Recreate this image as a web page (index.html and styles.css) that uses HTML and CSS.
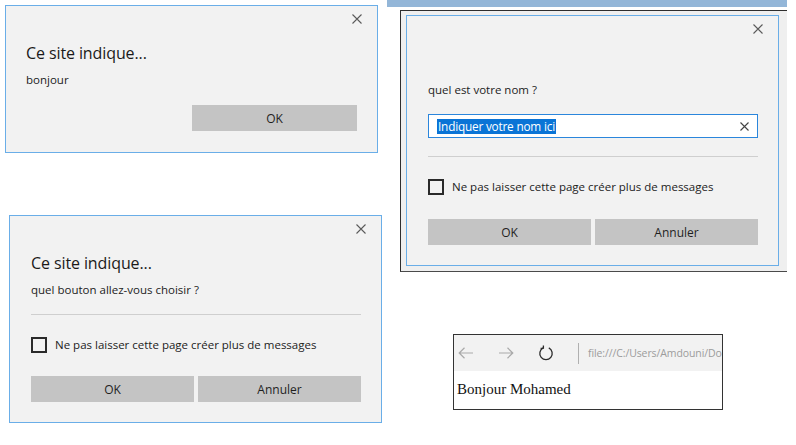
FILE: index.html
```html
<!DOCTYPE html>
<html lang="fr">
<head>
<meta charset="utf-8">
<title>Boîtes de dialogue</title>
<link rel="stylesheet" href="styles.css">
</head>
<body>
<div class="canvas">

  <section class="dialog d1">
    <div class="dlg-head">
      <svg class="close" width="10" height="10" viewBox="0 0 10 10"><path d="M0.5 0.5 L9.5 9.5 M9.5 0.5 L0.5 9.5"/></svg>
    </div>
    <h1 class="dlg-title">Ce site indique...</h1>
    <p class="dlg-msg">bonjour</p>
    <div class="dlg-actions end">
      <button class="btn">OK</button>
    </div>
  </section>

  <div class="top-bar"></div>
  <div class="frame">
    <section class="dialog d2">
      <div class="dlg-head">
        <svg class="close" width="10" height="10" viewBox="0 0 10 10"><path d="M0.5 0.5 L9.5 9.5 M9.5 0.5 L0.5 9.5"/></svg>
      </div>
      <p class="dlg-msg prompt">quel est votre nom ?</p>
      <div class="input">
        <span class="sel">Indiquer votre nom ici</span>
        <svg class="clear" width="9" height="9" viewBox="0 0 9 9"><path d="M0.5 0.5 L8.5 8.5 M8.5 0.5 L0.5 8.5"/></svg>
      </div>
      <hr class="sep sep-prompt">
      <label class="check"><span class="box"></span><span>Ne pas laisser cette page créer plus de messages</span></label>
      <div class="dlg-actions two">
        <button class="btn">OK</button>
        <button class="btn">Annuler</button>
      </div>
    </section>
  </div>

  <section class="dialog d3">
    <div class="dlg-head">
      <svg class="close" width="10" height="10" viewBox="0 0 10 10"><path d="M0.5 0.5 L9.5 9.5 M9.5 0.5 L0.5 9.5"/></svg>
    </div>
    <h1 class="dlg-title">Ce site indique...</h1>
    <p class="dlg-msg">quel bouton allez-vous choisir ?</p>
    <hr class="sep">
    <label class="check"><span class="box"></span><span>Ne pas laisser cette page créer plus de messages</span></label>
    <div class="dlg-actions two">
      <button class="btn">OK</button>
      <button class="btn">Annuler</button>
    </div>
  </section>

  <div class="browser">
    <div class="toolbar">
      <svg class="nav back" width="16" height="12" viewBox="0 0 16 12"><path d="M15 6 H1 M6.5 0.8 L1.2 6 L6.5 11.2"/></svg>
      <svg class="nav fwd" width="16" height="12" viewBox="0 0 16 12"><path d="M1 6 H15 M9.5 0.8 L14.8 6 L9.5 11.2"/></svg>
      <svg class="nav refresh" width="16" height="16" viewBox="0 0 16 16"><path d="M10.8 2.9 A6.2 6.2 0 1 1 5.2 2.9"/><path d="M5.4 0.4 L5.4 3.2 L2.6 3.4"/></svg>
      <span class="vsep"></span>
      <span class="url">file:///C:/Users/Amdouni/Do</span>
    </div>
    <div class="page">Bonjour Mohamed</div>
  </div>

</div>
</body>
</html>
```

FILE: styles.css
```css
* { box-sizing: border-box; }

html, body {
  margin: 0;
  padding: 0;
  background: #ffffff;
}

.canvas {
  position: relative;
  width: 796px;
  height: 445px;
  overflow: hidden;
  font-family: "Open Sans", "Noto Sans", sans-serif;
  color: #1f1f1f;
}

/* ---------- dialogs ---------- */
.dialog {
  position: absolute;
  width: 373px;
  display: flex;
  flex-direction: column;
  background: #f2f2f2;
  border: 1px solid #6aaee8;
  padding: 0 20px 20px 21px;
}

.d1 { left: 5px; top: 5px; height: 148px; padding-bottom: 21px; padding-left: 20px; }
.d2 { position: static; height: 251px; }
.d3 { left: 9px; top: 215px; height: 208px; }

.dlg-head {
  height: 36px;
  display: flex;
  justify-content: flex-end;
  align-items: flex-start;
  padding-top: 8px;
  margin-right: -5px;
}

.close { flex: none; }

.close path {
  stroke: #5a5a5a;
  stroke-width: 1.1;
  fill: none;
}

.dlg-title {
  margin: 0;
  font-size: 16px;
  line-height: 22px;
  font-weight: 400;
  color: #1a1a1a;
  letter-spacing: -0.1px;
}

.dlg-msg {
  margin: 8px 0 0;
  font-size: 11.5px;
  line-height: 16px;
  color: #222;
}

.dlg-msg.prompt { margin-top: 30px; }

.sep {
  margin: 16px 0 0;
  border: 0;
  border-top: 1px solid #cfcfcf;
  height: 0;
}

.sep-prompt { margin-top: 18px; }

.input {
  margin-top: 16px;
  height: 24px;
  background: #ffffff;
  border: 1px solid #2b86dc;
  display: flex;
  align-items: center;
  justify-content: space-between;
  padding: 0 8px 0 8px;
}

.sel {
  background: #0a74d6;
  color: #ffffff;
  font-size: 11.8px;
  line-height: 15px;
  padding: 0 1px;
  letter-spacing: -0.2px;
}

.clear { flex: none; }

.clear path {
  stroke: #444;
  stroke-width: 1.1;
  fill: none;
}

.check {
  margin-top: 22px;
  display: flex;
  align-items: center;
  gap: 8px;
  font-size: 11.5px;
  line-height: 16px;
  color: #222;
}

.box {
  width: 16px;
  height: 16px;
  border: 2px solid #2a2a2a;
  background: #f2f2f2;
  flex: none;
}

.dlg-actions {
  margin-top: auto;
  display: flex;
  gap: 4px;
}

.dlg-actions.end { justify-content: flex-end; }

.btn {
  height: 26px;
  width: 164px;
  border: 0;
  background: #c4c4c4;
  font-family: inherit;
  font-size: 12px;
  color: #1f1f1f;
  padding: 0;
}

.dlg-actions.end .btn { width: 165px; }

/* ---------- framed screenshot (top right) ---------- */
.top-bar {
  position: absolute;
  left: 387px;
  top: 0;
  width: 400px;
  height: 7px;
  background: #93b6d8;
}

.frame {
  position: absolute;
  left: 400px;
  top: 10px;
  width: 387px;
  height: 262px;
  background: #efefef;
  border-top: 1px solid #2e2e2e;
  border-left: 1px solid #2e2e2e;
  border-bottom: 1px solid #4a4a4a;
  padding: 4px 0 0 5px;
}

/* ---------- browser snippet ---------- */
.browser {
  position: absolute;
  left: 453px;
  top: 334px;
  width: 270px;
  height: 76px;
  border: 1px solid #333;
  background: #fff;
  overflow: hidden;
}

.toolbar {
  height: 36px;
  background: #f2f2f2;
  display: flex;
  align-items: center;
  padding-left: 4px;
  white-space: nowrap;
}

.nav { flex: none; }

.nav path {
  fill: none;
  stroke-width: 1.2;
}

.back path, .fwd path { stroke: #a9a9a9; }
.fwd { margin-left: 24px; }
.refresh { margin-left: 24px; }
.refresh path { stroke: #2a2a2a; stroke-width: 1.3; }

.vsep {
  width: 1px;
  height: 21px;
  background: #b0b0b0;
  margin-left: 24px;
  flex: none;
}

.url {
  margin-left: 9px;
  font-size: 10.5px;
  color: #9c9c9c;
  letter-spacing: -0.1px;
}

.page {
  padding: 10px 0 0 3px;
  font-family: "Liberation Serif", "Times New Roman", serif;
  font-size: 15px;
  line-height: 17px;
  color: #111;
}
```
